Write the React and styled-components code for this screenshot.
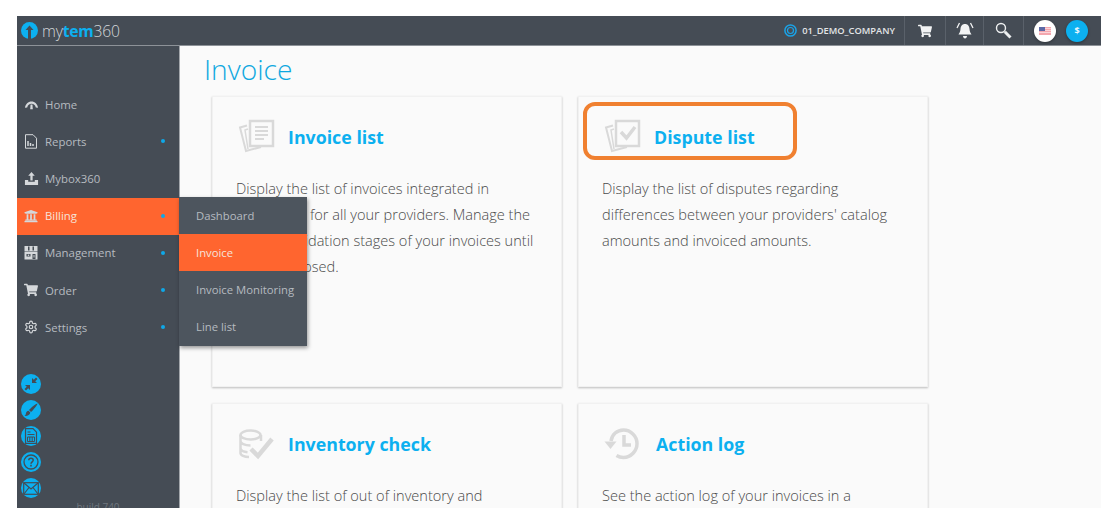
import React from 'react';
import styled, { createGlobalStyle } from 'styled-components';
import { FaUniversity, FaShoppingCart } from 'react-icons/fa';
import { LuSettings } from 'react-icons/lu';

const GlobalStyle = createGlobalStyle`
  html, body {
    margin: 0;
    background: #fff;
    font-family: "Open Sans", "Liberation Sans", sans-serif;
  }
`;

const GaugeIcon = () => (
  <svg width="15" height="15" viewBox="0 0 16 16" fill="none">
    <path d="M1 11.500C1.600 7.500 4.400 4.800 8 4.800s6.400 2.700 7 6.700l-2.400-.4C12 8.600 10.300 7.200 8 7.200S4 8.600 3.400 11.100z" fill="currentColor" />
    <path d="M7 8h2l.4 5H6.600z" fill="currentColor" />
  </svg>
);

const ReportIcon = () => (
  <svg width="14" height="15" viewBox="0 0 14 15" fill="none" stroke="currentColor">
    <path d="M1.500.7h7.500l3.500 3.500v10H1.500z" strokeWidth="1" />
    <path d="M4 12V7M6.500 12V9M9 12v-2" strokeWidth="1.500" />
  </svg>
);

const TrayIcon = () => (
  <svg width="15" height="15" viewBox="0 0 16 16" fill="currentColor">
    <path d="M8 1l3.500 4H9.200v5H6.800V5H4.500z" />
    <path d="M1 9.500h3.500v2h7v-2H15V15H1z" />
  </svg>
);

const StoreIcon = () => (
  <svg width="14" height="15" viewBox="0 0 14 15" fill="currentColor">
    <path d="M.5 1h13v5.500H.5z" />
    <path d="M4 1.500h1.500v4H4zM8.500 1.500H10v4H8.500z" fill="#454c55" />
    <path d="M.5 7h13v7.500H.5z" />
    <path d="M2.500 9h4v2.500h-4zM8.500 9h3v5h-3z" fill="#454c55" />
    <path d="M3.800 9.500h1.400v1.500H3.800zM9.500 10h1v2.500h-1z" fill="#c5c9cd" />
  </svg>
);

const PapersIcon = ({ check }) => (
  <svg width="38" height="36" viewBox="0 0 38 36" fill="none" stroke="#d9d9d9">
    <path d="M9 6.500L2 8.500l6 23.500 15-4" strokeWidth="2" />
    <path d="M10 30l-3-19 3-1" strokeWidth="1.500" />
    <rect x="12" y="2" width="23" height="25" strokeWidth="2.500" fill="#fafafa" />
    {check ? (
      <path d="M17 13l5.500 6L31 8" strokeWidth="3.500" />
    ) : (
      <path d="M17 8h13M17 12h13M17 16h13M17 20h9" strokeWidth="2" />
    )}
  </svg>
);

const InventoryIcon = () => (
  <svg width="36" height="32" viewBox="0 0 36 32" fill="none" stroke="#d9d9d9" strokeWidth="2.500">
    <ellipse cx="12.500" cy="7" rx="10" ry="4.500" />
    <path d="M2.500 7v18c0 2.500 4 4 8.500 4M23 7v6M2.500 13c0 2.500 4 4.500 10 4.500M2.500 20c0 2.300 3 3.800 7 4.200" />
    <path d="M13 21l7 7L34 11" strokeWidth="4.500" />
  </svg>
);

const HistoryIcon = () => (
  <svg width="36" height="32" viewBox="0 0 36 32" fill="none" stroke="#d9d9d9">
    <path d="M7 13C8 6.500 13 2 19.500 2 26.500 2 33 8 33 15.500S27 29.500 19.500 29.500c-3 0-5-.7-7-2" strokeWidth="3.500" />
    <path d="M0.500 13.500h12L6.500 21z" fill="#d9d9d9" stroke="none" />
    <path d="M20 7v10h7" strokeWidth="3.500" />
  </svg>
);

const BellIcon = () => (
  <svg width="18" height="17" viewBox="0 0 18 17" fill="#f2f3f4">
    <path d="M9 2c3 0 4.300 2.200 4.500 5 .2 2.500 1 4 2 5.500H2.500c1-1.500 1.800-3 2-5.500C4.700 4.200 6 2 9 2z" />
    <path d="M7 14h4c0 1.500-1 2.400-2 2.400S7 15.500 7 14z" />
    <path d="M3.500 1L1 6M14.500 1L17 6" stroke="#f2f3f4" strokeWidth="1.300" fill="none" />
  </svg>
);

const SearchIcon = () => (
  <svg width="17" height="17" viewBox="0 0 17 17" fill="none" stroke="#eef0f1">
    <circle cx="6" cy="6" r="4.500" strokeWidth="1.400" />
    <path d="M9.800 9.800l5.700 5.700" strokeWidth="3" />
  </svg>
);

const FlagIcon = () => (
  <svg width="12" height="8" viewBox="0 0 12 8">
    <rect width="12" height="8" fill="#f4a6ae" />
    <path d="M0 1.500h12M0 3.500h12M0 5.500h12" stroke="#fbdfe2" strokeWidth=".8" />
    <rect width="6" height="4" fill="#5c69a6" />
  </svg>
);

const RingIcon = () => (
  <svg width="13" height="13" viewBox="0 0 13 13" fill="none" stroke="#1aa3e8">
    <circle cx="6.500" cy="6.500" r="5.600" strokeWidth="1.500" />
    <circle cx="6.500" cy="6.500" r="3" strokeWidth="1.200" />
  </svg>
);

const LogoMark = () => (
  <svg width="17" height="17" viewBox="0 0 17 17">
    <circle cx="8.500" cy="8.500" r="8.500" fill="#0cb0f0" />
    <path d="M8.500 3.500L12.500 8H10v9H7V8H4.500z" fill="#454c55" />
  </svg>
);

const CollapseIcon = () => (
  <svg width="14" height="14" viewBox="0 0 14 14" fill="#454c55">
    <path d="M8 1v5h5l-1.800-1.800L13.500 2 12 .5 9.800 2.800zM6 13V8H1l1.800 1.800L.5 12 2 13.500l2.200-2.300z" />
  </svg>
);

const BrushIcon = () => (
  <svg width="14" height="14" viewBox="0 0 14 14" fill="#454c55">
    <path d="M13.500.5c.3.800-4.500 7-6.500 8.500L5 7C6.500 5 12.500.2 13.500.5z" />
    <path d="M4.500 7.800l1.800 1.800C6 12 3 13.500.5 13c1.500-.8 1.200-2 1.500-3 .3-1.200 1.300-2 2.500-2.200z" />
  </svg>
);

const SheetIcon = () => (
  <svg width="14" height="16" viewBox="0 0 14 16" fill="none" stroke="#454c55">
    <path d="M1.500.7h7.500l3.500 3.500v11.100h-11z" strokeWidth="1.200" />
    <path d="M3.500 9h7v4.500h-7zM5.800 9v4.500M8.200 9v4.500" strokeWidth="1" />
    <path d="M3.500 4h3M3.500 6.500h7" strokeWidth="1" />
  </svg>
);

const HelpIcon = () => (
  <svg width="16" height="16" viewBox="0 0 16 16" fill="none" stroke="#454c55">
    <circle cx="8" cy="8" r="7" strokeWidth="1.300" />
    <path d="M5.800 6.200C5.800 5 6.800 4.200 8 4.200s2.200.8 2.200 2C10.200 7.800 8 8 8 9.800" strokeWidth="1.500" />
    <path d="M8 10.800v1.700" strokeWidth="1.600" />
  </svg>
);

const MailIcon = () => (
  <svg width="16" height="13" viewBox="0 0 16 13" fill="none" stroke="#454c55" strokeWidth="1.200">
    <rect x=".7" y=".7" width="14.600" height="11.600" />
    <path d="M1 1l7 6 7-6M1 12l5-6.500M15 12l-5-6.500" />
  </svg>
);

const navItems = [
  { label: 'Home', icon: <GaugeIcon /> },
  { label: 'Reports', icon: <ReportIcon />, dot: true },
  { label: 'Mybox360', icon: <TrayIcon /> },
  { label: 'Billing', icon: <FaUniversity size={14} />, dot: true, active: true },
  { label: 'Management', icon: <StoreIcon />, dot: true },
  { label: 'Order', icon: <FaShoppingCart size={14} />, dot: true },
  { label: 'Settings', icon: <LuSettings size={14} />, dot: true },
];

const subItems = [
  { label: 'Dashboard' },
  { label: 'Invoice', active: true },
  { label: 'Invoice Monitoring' },
  { label: 'Line list' },
];

const tools = [<CollapseIcon />, <BrushIcon />, <SheetIcon />, <HelpIcon />, <MailIcon />];

const cards = [
  {
    title: 'Invoice list',
    icon: <PapersIcon />,
    text: 'Display the list of invoices integrated in mytem360 for all your providers. Manage the various validation stages of your invoices until they are closed.',
  },
  {
    title: 'Dispute list',
    icon: <PapersIcon check />,
    text: "Display the list of disputes regarding differences between your providers' catalog amounts and invoiced amounts.",
    marked: true,
  },
  {
    title: 'Inventory check',
    icon: <InventoryIcon />,
    text: 'Display the list of out of inventory and',
  },
  {
    title: 'Action log',
    icon: <HistoryIcon />,
    iconWidth: 54,
    text: 'See the action log of your invoices in a',
  },
];

const App = () => (
  <Shell>
    <GlobalStyle />
    <Header>
      <Logo>
        <LogoMark />
        <LogoText>my<b>tem</b>360</LogoText>
      </Logo>
      <HeaderRight>
        <Company><RingIcon />01_DEMO_COMPANY</Company>
        <HeaderButton $width={41}><FaShoppingCart size={14} color="#f2f3f4" /></HeaderButton>
        <HeaderButton $width={38}><BellIcon /></HeaderButton>
        <HeaderButton $width={40}><SearchIcon /></HeaderButton>
        <Round $bg="#fff"><FlagIcon /></Round>
        <Round $bg="#0cb0f0">$</Round>
      </HeaderRight>
    </Header>
    <Body>
      <Sidebar>
        <Nav>
          {navItems.map((item) => (
            <NavRow key={item.label} $active={item.active}>
              <NavIcon>{item.icon}</NavIcon>
              {item.label}
              {item.dot && <Dot />}
            </NavRow>
          ))}
        </Nav>
        <Submenu>
          {subItems.map((item) => (
            <SubRow key={item.label} $active={item.active}>{item.label}</SubRow>
          ))}
        </Submenu>
        <Tools>
          {tools.map((icon, i) => <Tool key={i}>{icon}</Tool>)}
        </Tools>
        <Build>build 740</Build>
      </Sidebar>
      <Content>
        <Title>Invoice</Title>
        <CardGrid>
          {cards.map((card) => (
            <Card key={card.title}>
              <CardHead>
                <CardIcon $width={card.iconWidth}>{card.icon}</CardIcon>
                <CardTitle>{card.title}</CardTitle>
                {card.marked && <Highlight />}
              </CardHead>
              <CardText>{card.text}</CardText>
            </Card>
          ))}
        </CardGrid>
      </Content>
    </Body>
  </Shell>
);

export default App;

const Shell = styled.div`
  margin: 16px 0 0 17px;
  height: 492px;
  display: flex;
  flex-direction: column;
  overflow: hidden;
`;

const Header = styled.header`
  flex: 0 0 29px;
  display: flex;
  align-items: center;
  justify-content: space-between;
  background: #454c55;
  border-bottom: 1px solid #8d9298;
  box-sizing: content-box;
`;

const Logo = styled.div`
  display: flex;
  align-items: center;
  gap: 4px;
  padding-left: 4px;
`;

const LogoText = styled.span`
  font-size: 15.700px;
  font-weight: 300;
  letter-spacing: -0.2px;
  color: #d4d7da;

  b {
    font-weight: 700;
    color: #0cb0f0;
  }
`;

const HeaderRight = styled.div`
  height: 100%;
  display: flex;
  align-items: center;
`;

const Company = styled.div`
  height: 100%;
  display: flex;
  align-items: center;
  gap: 5px;
  padding-right: 9px;
  font-size: 9.300px;
  font-weight: 600;
  color: #e3e5e7;
  border-right: 1px solid #5a616a;
`;

const HeaderButton = styled.div`
  width: ${(p) => p.$width}px;
  height: 100%;
  display: flex;
  align-items: center;
  justify-content: center;
  border-right: 1px solid #5a616a;
  box-sizing: border-box;
`;

const Round = styled.div`
  width: 22px;
  height: 22px;
  margin-left: 10px;
  border-radius: 50%;
  display: flex;
  align-items: center;
  justify-content: center;
  background: ${(p) => p.$bg};
  color: #e8f7fe;
  font-size: 9px;
  font-weight: 700;
  box-shadow: 0 1px 3px rgba(0, 0, 0, 0.35);

  &:last-child {
    margin-right: 13px;
  }
`;

const Body = styled.div`
  flex: 1;
  min-height: 0;
  display: flex;
`;

const Sidebar = styled.aside`
  position: relative;
  flex: 0 0 163px;
  box-sizing: border-box;
  padding-top: 40px;
  background: #454c55;
  border-right: 1px solid #a3a7ac;
`;

const Nav = styled.nav`
  display: flex;
  flex-direction: column;
`;

const NavRow = styled.div`
  box-sizing: border-box;
  height: 37.200px;
  display: flex;
  align-items: center;
  padding: 0 0 1px 6px;
  font-size: 11.400px;
  color: ${(p) => (p.$active ? '#f6e3da' : '#b6bbc0')};
  background: ${(p) => (p.$active ? '#ff652f' : 'transparent')};
`;

const NavIcon = styled.span`
  width: 16px;
  margin-right: 6px;
  display: flex;
  align-items: center;
  justify-content: center;
  color: #d5d8db;
`;

const Dot = styled.span`
  width: 4px;
  height: 4px;
  margin-left: auto;
  margin-right: 14px;
  border-radius: 50%;
  background: #0fa8e8;
`;

const Submenu = styled.div`
  position: absolute;
  top: 151px;
  left: 162px;
  width: 128px;
  z-index: 2;
  background: #4d555e;
  box-shadow: 1px 2px 4px rgba(0, 0, 0, 0.4);
`;

const SubRow = styled.div`
  box-sizing: border-box;
  height: 37.200px;
  display: flex;
  align-items: center;
  padding: 0 0 1px 17px;
  font-size: 11.300px;
  color: ${(p) => (p.$active ? '#f6e3da' : '#b6bbc0')};
  background: ${(p) => (p.$active ? '#ff652f' : 'transparent')};
`;

const Tools = styled.div`
  margin-top: 28px;
  padding-left: 4px;
  display: flex;
  flex-direction: column;
  gap: 6px;
`;

const Tool = styled.div`
  width: 20px;
  height: 20px;
  border-radius: 50%;
  background: #0cb0f0;
  display: flex;
  align-items: center;
  justify-content: center;
`;

const Build = styled.div`
  margin-top: 2px;
  text-align: center;
  font-size: 10px;
  color: #6f767e;
`;

const Content = styled.main`
  flex: 1;
  min-width: 0;
  background: #fafafa;
  padding: 0 0 0 24px;
  overflow: hidden;
`;

const Title = styled.h1`
  margin: 0;
  height: 50px;
  line-height: 46px;
  font-size: 28.200px;
  font-weight: 300;
  color: #0fa8e0;
`;

const CardGrid = styled.div`
  display: grid;
  grid-template-columns: 350px 350px;
  grid-auto-rows: 291px;
  gap: 16px;
  margin-left: 8px;
`;

const Card = styled.article`
  box-sizing: border-box;
  padding: 23px 23px 0;
  background: #fafafa;
  border: 1px solid #f1f1f1;
  box-shadow: 0 1px 2px rgba(0, 0, 0, 0.25);
`;

const CardHead = styled.div`
  position: relative;
  height: 34px;
  display: flex;
  align-items: center;
  margin-bottom: 21px;
`;

const CardIcon = styled.div`
  width: ${(p) => p.$width || 52}px;
  display: flex;
  padding-left: 2px;
  box-sizing: border-box;
`;

const CardTitle = styled.h2`
  margin: 0;
  font-size: 17.800px;
  font-weight: 700;
  color: #0cb0f0;
`;

const Highlight = styled.div`
  position: absolute;
  top: -18px;
  left: -19px;
  width: 214px;
  height: 58px;
  box-sizing: border-box;
  border: 4px solid #f08030;
  border-radius: 12px;
`;

const CardText = styled.p`
  margin: 0;
  font-size: 14.550px;
  font-weight: 300;
  line-height: 26px;
  color: #4a4a4a;
`;
